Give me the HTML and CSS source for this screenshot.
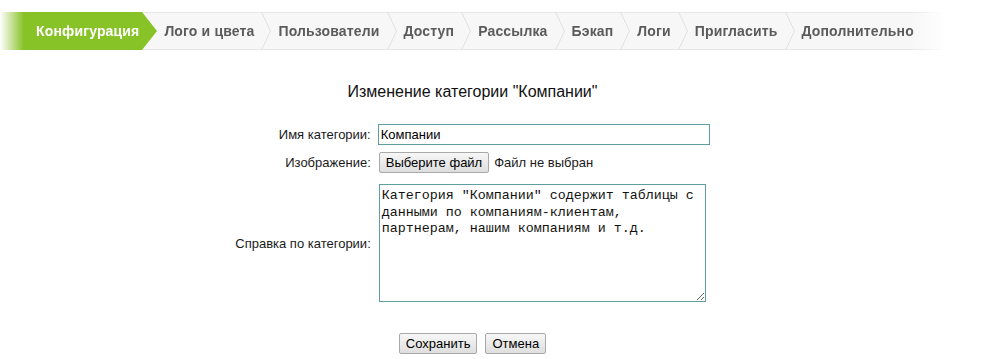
FILE: index.html
```html
<!doctype html>
<html lang="ru">
<head>
  <meta charset="UTF-8">
  <title>Изменение категории</title>
  <link rel="stylesheet" href="styles.css">
</head>
<body>
  <div class="page">
    <nav class="steps">
      <a class="step active" href="#">Конфигурация</a>
      <a class="step" href="#">Лого и цвета</a>
      <svg class="sep" viewBox="0 0 10 38"><polyline points="0.5,0 9.5,19 0.5,38"/></svg>
      <a class="step" href="#">Пользователи</a>
      <svg class="sep" viewBox="0 0 10 38"><polyline points="0.5,0 9.5,19 0.5,38"/></svg>
      <a class="step" href="#">Доступ</a>
      <svg class="sep" viewBox="0 0 10 38"><polyline points="0.5,0 9.5,19 0.5,38"/></svg>
      <a class="step" href="#">Рассылка</a>
      <svg class="sep" viewBox="0 0 10 38"><polyline points="0.5,0 9.5,19 0.5,38"/></svg>
      <a class="step" href="#">Бэкап</a>
      <svg class="sep" viewBox="0 0 10 38"><polyline points="0.5,0 9.5,19 0.5,38"/></svg>
      <a class="step" href="#">Логи</a>
      <svg class="sep" viewBox="0 0 10 38"><polyline points="0.5,0 9.5,19 0.5,38"/></svg>
      <a class="step" href="#">Пригласить</a>
      <svg class="sep" viewBox="0 0 10 38"><polyline points="0.5,0 9.5,19 0.5,38"/></svg>
      <a class="step" href="#">Дополнительно</a>
    </nav>

    <h2 class="title">Изменение категории "Компании"</h2>

    <form class="cat-form">
      <table class="fields">
        <tr>
          <td class="label">Имя категории:</td>
          <td class="field"><input type="text" class="text-input" value="Компании"></td>
        </tr>
        <tr>
          <td class="label">Изображение:</td>
          <td class="field">
            <span class="file-pick">
              <button type="button" class="btn">Выберите файл</button>
              <span class="file-name">Файл не выбран</span>
            </span>
          </td>
        </tr>
        <tr class="area-row">
          <td class="label">Справка по категории:</td>
          <td class="field"><textarea class="help-text">Категория "Компании" содержит таблицы с данными по компаниям-клиентам, партнерам, нашим компаниям и т.д.</textarea></td>
        </tr>
      </table>

      <div class="actions">
        <button type="submit" class="btn">Сохранить</button>
        <button type="button" class="btn">Отмена</button>
      </div>
    </form>
  </div>
</body>
</html>
```

FILE: styles.css
```css
:root {
  --green: #87c226;
  --step-text: #5b5b5b;
  --field-border: #5f9ea0;
}

* {
  box-sizing: border-box;
}

body {
  margin: 0;
  font-family: 'Liberation Sans', Arial, sans-serif;
  color: #1a1a1a;
  background: #fff;
}

.page {
  width: 945px;
  padding-top: 12px;
}

/* wizard steps */
.steps {
  display: flex;
  align-items: stretch;
  height: 38px;
  background:
    linear-gradient(#e6e6e6, #e6e6e6) top / 100% 1px no-repeat,
    linear-gradient(#e6e6e6, #e6e6e6) bottom / 100% 1px no-repeat,
    #f7f7f7;
  -webkit-mask-image: linear-gradient(to right, #000 910px, transparent 945px);
  mask-image: linear-gradient(to right, #000 910px, transparent 945px);
}

.step {
  display: flex;
  align-items: center;
  padding: 0 7px;
  font-size: 14px;
  font-weight: bold;
  letter-spacing: 0.15px;
  color: var(--step-text);
  text-decoration: none;
  white-space: nowrap;
}

.step.active {
  position: relative;
  padding: 0 3px 0 36px;
  margin-right: 15px;
  color: #fff;
  background: linear-gradient(to right, #fff 0, var(--green) 24px);
}

.step.active::after {
  content: '';
  position: absolute;
  left: 100%;
  top: 0;
  border-left: 15px solid var(--green);
  border-top: 19px solid transparent;
  border-bottom: 19px solid transparent;
}

.sep {
  width: 10px;
  height: 38px;
  flex: none;
}

.sep polyline {
  fill: none;
  stroke: #e0e0e0;
  stroke-width: 1;
}

/* form */
.title {
  margin: 33px 0 0;
  font-size: 16px;
  font-weight: normal;
  line-height: 18px;
  text-align: center;
  color: #111;
}

.cat-form {
  margin-top: 20px;
}

.fields {
  margin: 0 auto;
  border-collapse: collapse;
  font-size: 13px;
}

.fields td {
  padding: 3px 0 4px;
}

.fields .label {
  padding-right: 7px;
  text-align: right;
  white-space: nowrap;
}

.text-input {
  display: block;
  width: 332px;
  height: 21px;
  margin: 0;
  padding: 1px 2px;
  border: 1px solid var(--field-border);
  font: 13px 'Liberation Sans', Arial, sans-serif;
  color: #000;
}

.file-pick {
  display: flex;
  align-items: center;
  gap: 5px;
  padding-left: 1px;
}

.area-row td {
  padding-top: 7px;
}

.help-text {
  display: block;
  width: 327px;
  height: 118px;
  margin: 0 0 0 1px;
  padding: 3px 2px;
  border: 1px solid var(--field-border);
  font: 13.33px/16.5px 'Liberation Mono', 'Courier New', monospace;
  color: #111;
  resize: both;
}

.btn {
  height: 21px;
  margin: 0;
  padding: 0 6px;
  border: 1px solid #a9a9a9;
  border-radius: 2px;
  background: linear-gradient(#f7f7f7, #dedede);
  font: 13px 'Liberation Sans', Arial, sans-serif;
  color: #000;
}

.actions {
  display: flex;
  justify-content: center;
  gap: 8px;
  margin-top: 27px;
}
```
